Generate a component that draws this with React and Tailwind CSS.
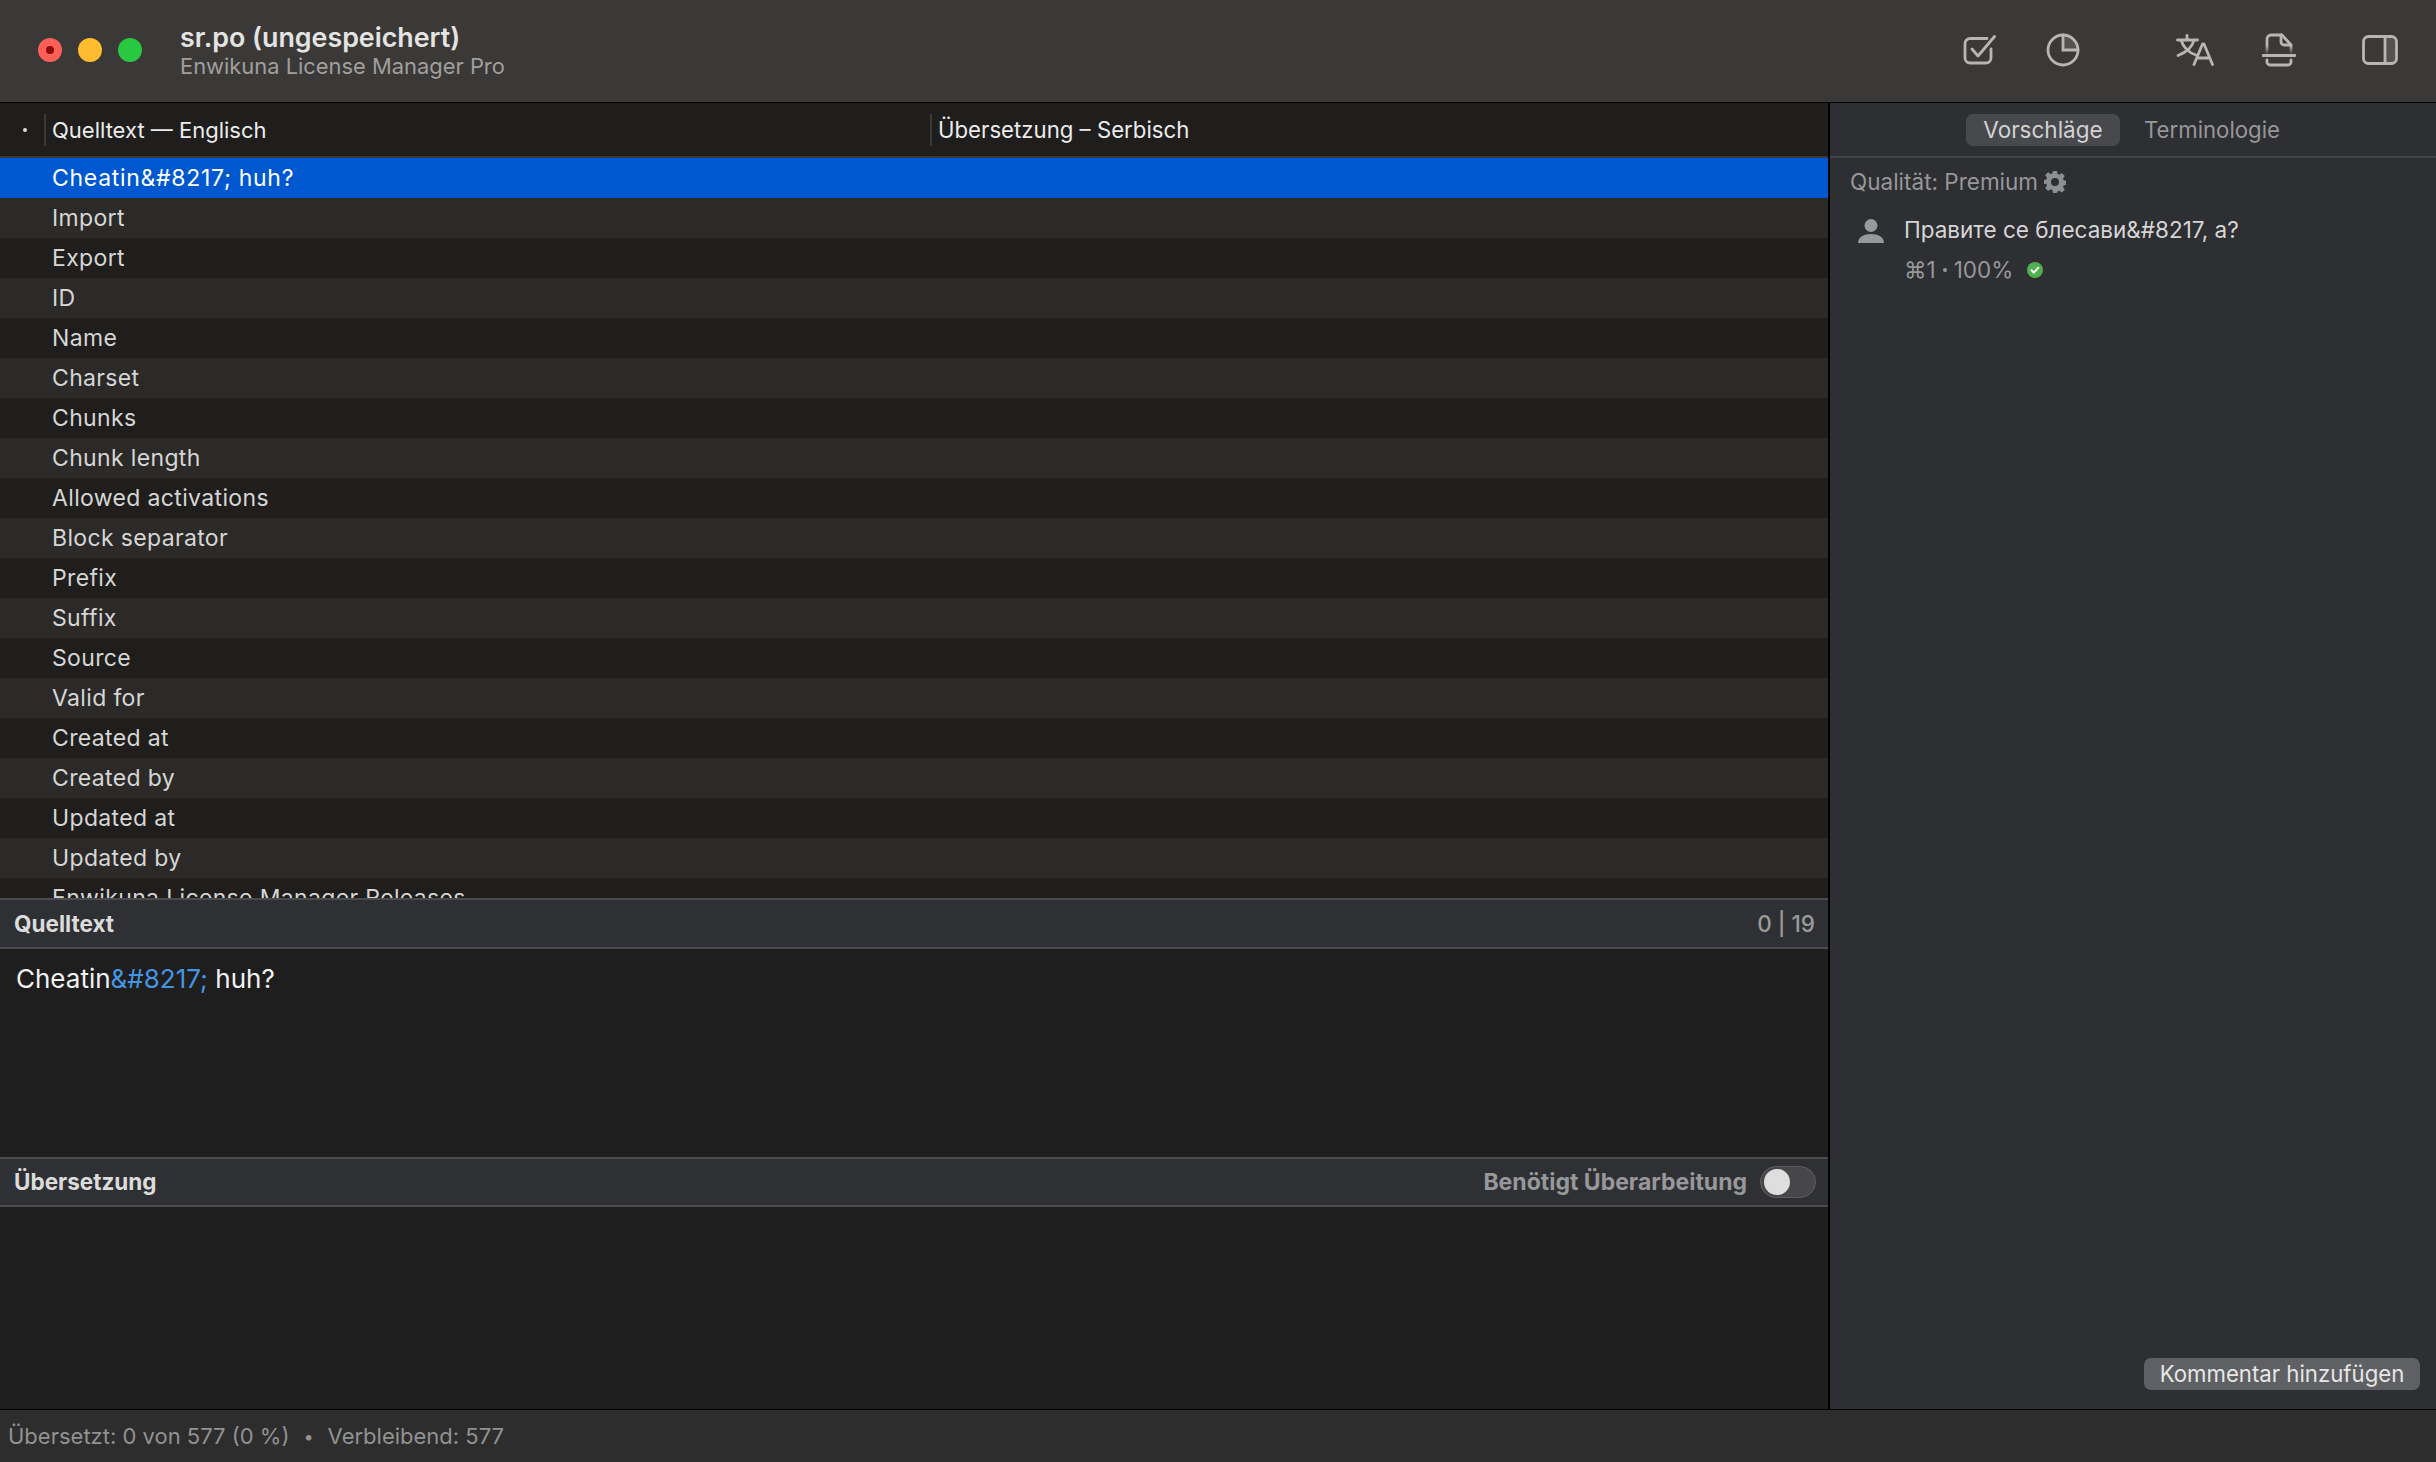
import React from "react";

const rows = [
  "Cheatin&#8217; huh?",
  "Import",
  "Export",
  "ID",
  "Name",
  "Charset",
  "Chunks",
  "Chunk length",
  "Allowed activations",
  "Block separator",
  "Prefix",
  "Suffix",
  "Source",
  "Valid for",
  "Created at",
  "Created by",
  "Updated at",
  "Updated by",
  "Enwikuna License Manager Releases",
];

const CheckIcon = () => (
  <svg width="34" height="30" viewBox="0 0 34 30" fill="none" stroke="#b7b6b4" strokeWidth="2.8" strokeLinecap="round" strokeLinejoin="round">
    <path d="M24 3.5H7a5 5 0 0 0-5 5V23a5 5 0 0 0 5 5h16a5 5 0 0 0 5-5V14" />
    <path d="M9 14l6 7L31.5 1.5" />
  </svg>
);

const PieIcon = () => (
  <svg width="34" height="34" viewBox="0 0 34 34" fill="none" stroke="#b7b6b4" strokeWidth="2.8" strokeLinecap="round">
    <path d="M17 17V2a15 15 0 0 1 15 15z" fill="#55534f" stroke="none" />
    <circle cx="17" cy="17" r="15" />
    <path d="M17 2v15h15" />
  </svg>
);

const TranslateIcon = () => (
  <svg width="38" height="32" viewBox="0 0 38 32" fill="none" stroke="#b7b6b4" strokeWidth="2.8" strokeLinecap="round" strokeLinejoin="round">
    <path d="M1.5 6h20M11 1.5V6M5 6c2 7 8 13 15 15M18 6c-1.500 7-7 12-16 15.500" />
    <path d="M18 30.500L26.500 10h1.500L36.500 30.500M21 24h12.500" />
  </svg>
);

const PrintIcon = () => (
  <svg width="34" height="34" viewBox="0 0 34 34" fill="none" strokeWidth="2.8" strokeLinecap="round" strokeLinejoin="round">
    <defs>
      <linearGradient id="fade" x1="0" y1="0" x2="0" y2="1">
        <stop offset="0.6" stopColor="#b7b6b4" />
        <stop offset="1" stopColor="#b7b6b4" stopOpacity="0.15" />
      </linearGradient>
    </defs>
    <path d="M5 20V6a4 4 0 0 1 4-4h11l9 10v8" stroke="url(#fade)" />
    <path d="M19 2v7a3 3 0 0 0 3 3h7" stroke="#b7b6b4" />
    <path d="M1 22.500h32" stroke="#b7b6b4" />
    <path d="M5 27v2a3 3 0 0 0 3 3h18a3 3 0 0 0 3-3v-2" stroke="#b7b6b4" />
  </svg>
);

const SidebarIcon = () => (
  <svg width="36" height="30" viewBox="0 0 36 30" fill="none" stroke="#b7b6b4" strokeWidth="2.8">
    <path d="M23 2h7a4 4 0 0 1 4 4v18a4 4 0 0 1-4 4h-7z" fill="#55534f" stroke="none" />
    <rect x="1.500" y="1.500" width="33" height="27" rx="5" />
    <path d="M23 2v26" />
  </svg>
);

const GearIcon = () => (
  <svg width="22" height="22" viewBox="0 0 22 22" fill="#8e8f91">
    <path fillRule="evenodd" d="M9 0h4l.6 3.100 1.700.7 2.600-1.800 2.900 2.900-1.800 2.600.7 1.700 2.300.6v4l-2.300.6-.7 1.700 1.800 2.600-2.900 2.900-2.600-1.800-1.700.7L13 22H9l-.6-3.100-1.700-.7-2.600 1.800-2.900-2.900 1.800-2.600-.7-1.700L0 13V9l2.300-.6.700-1.700-1.800-2.600L4.100 1.200l2.600 1.800 1.700-.7zM11 7a4 4 0 1 0 0 8 4 4 0 0 0 0-8z" />
  </svg>
);

const PersonIcon = () => (
  <svg width="28" height="26" viewBox="0 0 28 26" fill="#98999b">
    <circle cx="14" cy="7.500" r="6.500" />
    <path d="M1 25c0-6 6-9 13-9s13 3 13 9z" />
  </svg>
);

const GreenCheck = () => (
  <svg width="16" height="16" viewBox="0 0 16 16" fill="none">
    <circle cx="8" cy="8" r="8" fill="#4fb04f" />
    <path d="M4.500 8.300l2.400 2.400 4.400-5" stroke="#fff" strokeWidth="2" strokeLinecap="round" strokeLinejoin="round" />
  </svg>
);

const App = () => {
  return (
    <div className="flex h-[1462px] w-[2436px] flex-col overflow-hidden bg-[#1e1e1e] font-['Inter',sans-serif] text-[22.5px] antialiased">
      {/* title bar */}
      <div className="flex h-[103px] shrink-0 items-center border-b border-black bg-[#3a3937]">
        <div className="flex items-center gap-4 pb-[2px] pl-[38px]">
          <div className="flex h-6 w-6 items-center justify-center rounded-full bg-[#ff5f57]">
            <div className="h-2 w-2 rounded-full bg-[#8f0a05]" />
          </div>
          <div className="h-6 w-6 rounded-full bg-[#febc2e]" />
          <div className="h-6 w-6 rounded-full bg-[#28c840]" />
        </div>
        <div className="ml-[38px] flex flex-col pb-[2px]">
          <span className="text-[26.8px] leading-[32px] font-semibold text-[#e4e4e3]">sr.po (ungespeichert)</span>
          <span className="text-[21.9px] leading-[26px] text-[#a09f9d]">Enwikuna License Manager Pro</span>
        </div>
        <div className="ml-auto flex items-center pr-[38px] pb-[3px]">
          <div className="mr-[49px]"><CheckIcon /></div>
          <div className="mr-[96px]"><PieIcon /></div>
          <div className="mr-[48px]"><TranslateIcon /></div>
          <div className="mr-[66px]"><PrintIcon /></div>
          <SidebarIcon />
        </div>
      </div>

      <div className="flex min-h-0 flex-1">
        {/* left column */}
        <div className="flex w-[1828px] shrink-0 flex-col">
          <div className="flex h-[53px] shrink-0 items-center bg-[#1f1e1d] text-[#ececec]">
            <div className="flex w-[44px] justify-center pl-[6px]">
              <div className="h-1 w-1 rounded-full bg-[#dddddd]" />
            </div>
            <div className="flex h-8 w-[886px] items-center border-l-2 border-[#3a3938] pt-[1px] pl-[6px] text-[22px]">Quelltext — Englisch</div>
            <div className="flex h-8 items-center border-l-2 border-[#3a3938] pt-[1px] pl-[6px] text-[22.2px]">Übersetzung – Serbisch</div>
          </div>
          <div className="h-[2px] shrink-0 bg-[#37383a]" />
          <div className="h-[740px] shrink-0 overflow-hidden text-[23px] tracking-[0.35px]">
            {rows.map((row, i) => (
              <div
                key={row}
                className={
                  i === 0
                    ? "flex h-10 items-center bg-[#0058d0] pl-[52px] tracking-[0.7px] text-white"
                    : i % 2 === 1
                    ? "flex h-10 items-center bg-[#2b2a29] pl-[52px] text-[#d6d6d5]"
                    : "flex h-10 items-center bg-[#1f1e1d] pl-[52px] text-[#d6d6d5]"
                }
              >
                {row}
              </div>
            ))}
          </div>

          <div className="flex h-[51px] shrink-0 items-center justify-between border-y-2 border-[#4b4b4d] bg-[#2f3033] pr-[13px] pl-[14px]">
            <span className="font-bold text-[#dcdcdc]">Quelltext</span>
            <span className="font-medium text-[#9a9a9b]">0 | 19</span>
          </div>
          <div className="h-[208px] shrink-0 bg-[#1e1e1e] pt-[13px] pl-[16px] text-[26px] leading-[34px] text-[#f2f2f2]">
            Cheatin<span className="text-[#4596e2]">&amp;#8217;</span> huh?
          </div>
          <div className="flex h-[50px] shrink-0 items-center justify-between border-y-2 border-[#4b4b4d] bg-[#2f3033] pr-[12px] pl-[14px]">
            <span className="font-bold text-[#dcdcdc]">Übersetzung</span>
            <div className="flex items-center gap-[13px]">
              <span className="text-[23px] font-bold text-[#98989a]">Benötigt Überarbeitung</span>
              <div className="flex h-[32px] w-[56px] items-center rounded-full border border-[#5d5d5f] bg-[#474749] pl-[3px]">
                <div className="h-[26px] w-[26px] rounded-full bg-[#dedede]" />
              </div>
            </div>
          </div>
          <div className="min-h-0 flex-1 bg-[#1e1e1e]" />
        </div>

        {/* right panel */}
        <div className="flex min-w-0 flex-1 flex-col border-l-2 border-black bg-[#2e2f32]">
          <div className="flex h-[55px] shrink-0 items-center justify-center gap-[24px] border-b-2 border-[#414245] pr-[20px] text-[#d2d2d3]">
            <div className="flex h-8 w-[154px] items-center justify-center rounded-[7px] bg-[#48494d]">Vorschläge</div>
            <div className="text-[22.2px] text-[#97979a]">Terminologie</div>
          </div>
          <div className="mt-[7px] flex items-center gap-[6px] pl-[20px] text-[#97979a]">
            <span>Qualität: Premium</span>
            <GearIcon />
          </div>
          <div className="mt-[16px] flex pl-[27px]">
            <div className="mt-[3px] w-[47px] shrink-0"><PersonIcon /></div>
            <div className="flex flex-col gap-[10px]">
              <span className="leading-[30px] text-[#d6d6d7]">Правите се блесави&amp;#8217, а?</span>
              <div className="flex items-center gap-[14px] leading-[30px] text-[#97979a]">
                <div className="flex items-center gap-[7px]">
                  <span>⌘1</span>
                  <div className="h-1 w-1 rounded-full bg-[#97979a]" />
                  <span>100%</span>
                </div>
                <GreenCheck />
              </div>
            </div>
          </div>
          <div className="mt-auto flex justify-end pr-[16px] pb-[19px]">
            <div className="flex h-8 w-[276px] items-center justify-center rounded-[7px] bg-[#5f6063] text-[22.2px] text-[#e6e6e6]">Kommentar hinzufügen</div>
          </div>
        </div>
      </div>

      {/* status bar */}
      <div className="flex h-[53px] shrink-0 items-center gap-[14px] border-t border-black bg-[#2d2d2d] pl-[8px] text-[22px] text-[#929292]">
        <span>Übersetzt: 0 von 577 (0 %)</span>
        <span className="text-[18px]">•</span>
        <span>Verbleibend: 577</span>
      </div>
    </div>
  );
};

export default App;
